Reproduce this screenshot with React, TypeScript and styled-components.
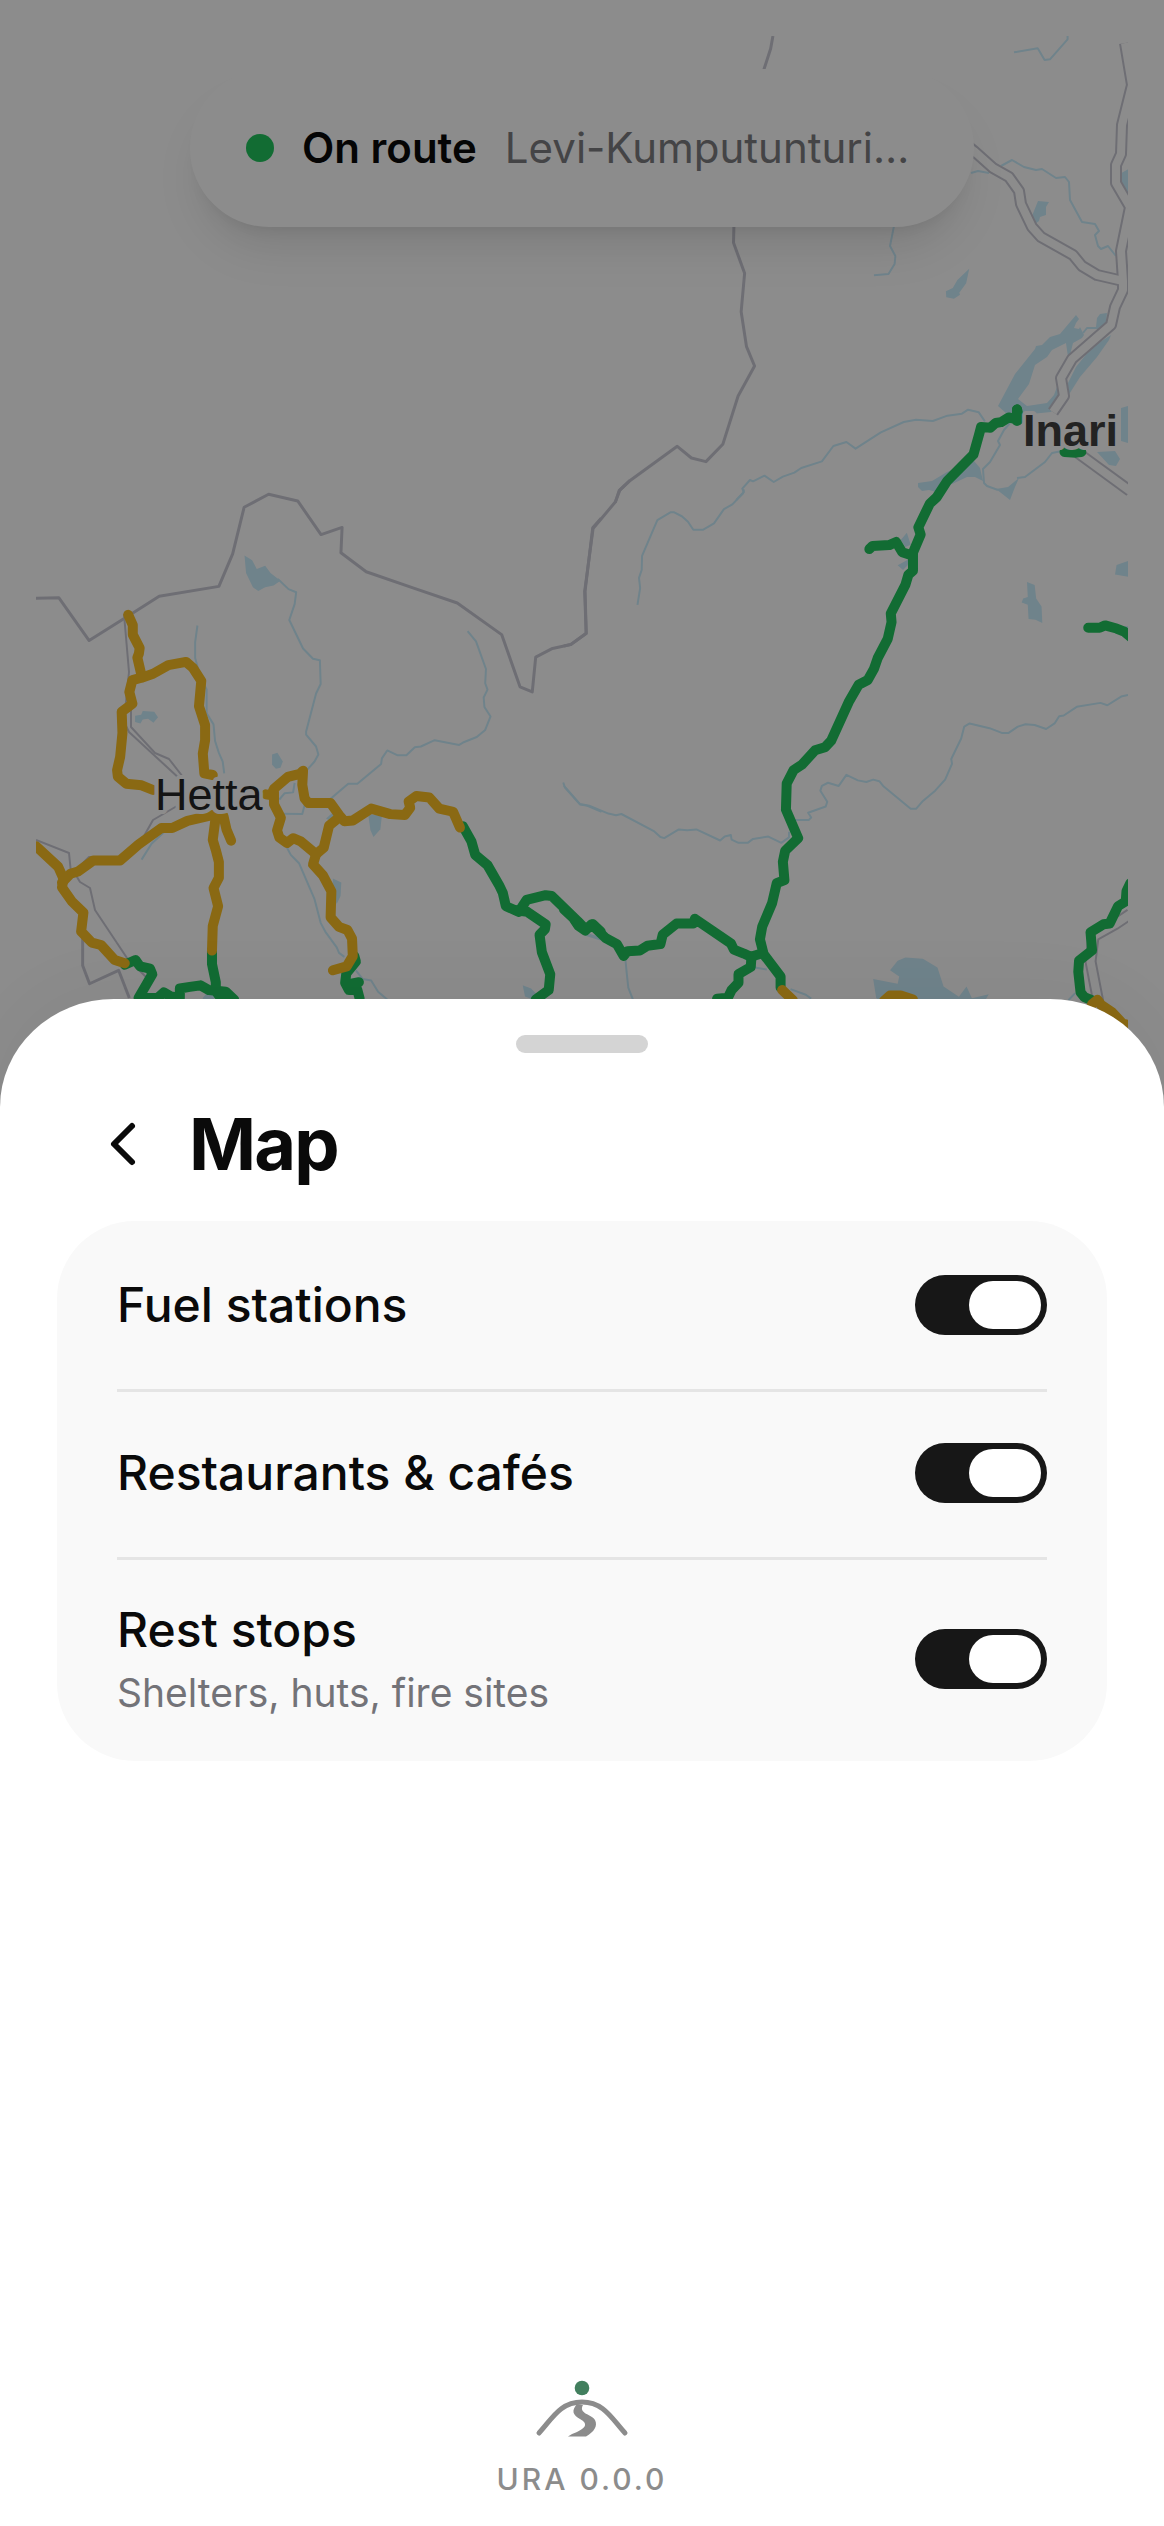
import React from "react";
import styled, { createGlobalStyle } from "styled-components";
import { ChevronLeft } from "lucide-react";

const GlobalStyle = createGlobalStyle`
  *, *::before, *::after { box-sizing: border-box; }
  body { margin: 0; background: #ffffff; font-family: Inter, "Liberation Sans", sans-serif; color: #0a0a0a; }
`;

const Screen = styled.main`
  display: grid;
  grid-template-columns: minmax(0, 1fr);
  grid-template-rows: 999px 120px 1fr;
  min-height: 100vh;
`;

const MapFrame = styled.div`
  grid-area: 1 / 1 / 3 / 2;
  padding: 36px 36px 0;
  background: #ffffff;
`;

const MapSvg = styled.svg`
  display: block;
  width: 100%;
  height: 1083px;
  path { vector-effect: non-scaling-stroke; stroke-linejoin: round; }
`;

const Line = styled.path<{ $color: string; $width: number; $round?: boolean }>`
  fill: none;
  stroke: ${(p) => p.$color};
  stroke-width: ${(p) => p.$width}px;
  stroke-linecap: ${(p) => (p.$round ? "round" : "butt")};
`;

const Water = styled.path`
  fill: #cbeefd;
`;

const Place = styled.text<{ $major?: boolean }>`
  font: ${(p) => (p.$major ? 700 : 400)} 45px "Liberation Sans", Arial, sans-serif;
  fill: ${(p) => (p.$major ? "#404040" : "#262626")};
  stroke: #ffffff;
  stroke-width: 8px;
  stroke-linejoin: round;
  paint-order: stroke;
`;

const StatusPill = styled.div`
  grid-area: 1 / 1;
  justify-self: center;
  align-self: start;
  display: flex;
  align-items: center;
  gap: 28px;
  width: 784px;
  max-width: calc(100% - 72px);
  height: 158px;
  margin-top: 69px;
  padding: 0 56px;
  border-radius: 79px;
  background: #ffffff;
  box-shadow: 0 30px 45px -9px rgba(0, 0, 0, 0.1), 0 12px 18px -12px rgba(0, 0, 0, 0.1);
  font-size: 42px;
  line-height: 60px;
  white-space: nowrap;
`;

const StatusDot = styled.span`
  flex: none;
  width: 28px;
  height: 28px;
  border-radius: 50%;
  background: #22c55e;
`;

const StatusLabel = styled.strong`
  font-weight: 600;
`;

const StatusRoute = styled.span`
  overflow: hidden;
  text-overflow: ellipsis;
  color: #7c7c80;
`;

const Scrim = styled.div`
  grid-area: 1 / 1 / 4 / 2;
  background: rgba(0, 0, 0, 0.45);
`;

const Sheet = styled.section`
  grid-area: 2 / 1 / 4 / 2;
  display: flex;
  flex-direction: column;
  padding: 36px 57px 24px;
  border-radius: 114px 114px 0 0 / 108px 108px 0 0;
  background: #ffffff;
  box-shadow: 0 -12px 72px rgba(0, 0, 0, 0.04);
`;

const Handle = styled.div`
  align-self: center;
  width: 132px;
  height: 18px;
  border-radius: 9px;
  background: #d4d4d4;
`;

const Header = styled.header`
  display: flex;
  align-items: center;
  gap: 30px;
  height: 96px;
  margin: 43px 0 29px;
  padding-left: 30px;
`;

const BackButton = styled.button`
  display: flex;
  padding: 0;
  border: 0;
  background: none;
  color: #0a0a0a;
  cursor: pointer;
`;

const Title = styled.h1`
  margin: 0;
  font-size: 72px;
  line-height: 96px;
  font-weight: 700;
  letter-spacing: -0.025em;
`;

const Card = styled.div`
  padding: 0 60px;
  border-radius: 78px;
  background: #f9f9f9;
`;

const Row = styled.label`
  display: flex;
  align-items: center;
  justify-content: space-between;
  min-height: 168px;
  padding: 39px 0;
  cursor: pointer;
  & + & { box-shadow: inset 0 3px #e5e5e5; }
`;

const RowText = styled.span`
  display: flex;
  flex-direction: column;
`;

const RowLabel = styled.span`
  font-size: 48px;
  line-height: 68px;
  font-weight: 500;
`;

const RowHint = styled.span`
  font-size: 39px;
  line-height: 58px;
  color: #737378;
`;

const Toggle = styled.input`
  appearance: none;
  flex: none;
  display: flex;
  align-items: center;
  width: 132px;
  height: 60px;
  margin: 0;
  padding: 6px;
  border-radius: 30px;
  background: #d4d4d4;
  cursor: pointer;
  &::before {
    content: "";
    width: 72px;
    height: 48px;
    border-radius: 24px;
    background: #ffffff;
  }
  &:checked { justify-content: flex-end; background: #171717; }
`;

const Footer = styled.footer`
  display: flex;
  flex-direction: column;
  align-items: center;
  gap: 20px;
  margin-top: auto;
  padding-top: 48px;
  color: #8c8c8c;
  font-size: 30px;
  line-height: 45px;
  font-weight: 500;
  letter-spacing: 0.1em;
`;

type Tile = { at: string; water: string[]; rivers: string[]; borders: string[]; roads: string[]; amber: string[]; green: string[] };

const northEast: Tile = {
  at: "translate(564 0) scale(.38265 .33333)",
  water: [
    "M1474 508v70l-18-30v-28z",
    "M1059 806l-8 44-18 28 2 6-16 12-20-4-1-18 18-10 12-24z",
  ],
  rivers: [
    "M1176 157l62-12 18 35 14-2 46-60v-10",
    "M862 680l-10 58 14 30-2 24-16 30-38 4",
    "M450 1500L470 1476 466 1466 486 1440 494 1444 524 1427 548 1446 572 1430 602 1418 620 1404 674 1384 704 1338 738 1326 762 1346 828 1297 888 1266 920 1259 964 1263 1002 1247 1040 1241 1056 1229 1084 1237 1100 1264",
  ],
  borders: [
    "M546 108l-6 38-18 64",
    "M444 680l-1 48 29 92-9 115 14 105 21 58-43 90-40 145-44 52-38-11-37-35-124 103-28 30-10 36",
  ],
  roads: [],
  amber: [],
  green: ["M1184 1228L1188 1256", "M1308 1356l30 2 14-2"],
};

const inari: Tile = {
  at: "translate(0 0)",
  water: [
    "M1038 201l11 1-3 5v8l-6 2-1 4-4 3-3-8z",
    "M1076 315l3 4-3 4-2 5 5 1 1-2 4 8-2 3-9 5-3 12-2 2-2-14-14 7-5 7-12 8-6 19-11 15 9 7 20-3 7-8 3-8h2l1 12-9 13-20 2-17 2-7-2-9-8 17-32 20-25 1-3 6-1 8-8 10-3z",
    "M1097 318l3-4 7-1-1 10-8 6-2-2z",
    "M1111 335l-2 5-12 17-17 20-12 19-1-11 9-18 16-20z",
    "M918 483l14-2 15-9 27-11 6 7 3 13-8-4h-8l-17 8-14 7-7-2-7 1-4-4z",
    "M996 489l12-2 11-9-4 9-5 13z",
    "M1121 408l7-2v37l-7-2z",
    "M1097 452l18-1 5 8-4 7-7-1z",
  ],
  rivers: [
    "M971 173l7-2 11 2M1001 166l11-6 12 7 12 3 6-1 14 9 9-1 4 5 1 18 6 11 6 11 13 2 4 7-4 4 3 11 3 3 7-3 8 10",
    "M1010 423l-6 7-6 11 2 4-10 17-7 7 1 14 3 3 11 4",
    "M1017 478l8-1 20-15 7-9 10-2",
    "M1083 333l4-5h11",
    "M1114 298l5-8",
  ],
  borders: [],
  roads: [
    "M964 143L974 151 993 168 1009 177 1019 191 1021 204 1032 227 1041 237 1073 255 1082 266 1097 275 1123 281",
    "M1125 43L1132 85 1122 125 1121 154 1116 165 1116 183 1130 207 1121 251 1123 281 1123 290 1115 307 1111 325 1072 359 1061 378 1064 396 1053 412",
    "M1078 453L1130 491",
  ],
  amber: [],
  green: ["M1017 411v10"],
};

const west: Tile = {
  at: "translate(0 480) scale(.38265 .39541)",
  water: [
    "M639 191l20 12 12 22 22-8 14 18 26 20-18 12-22 4-18 10-14-10-18-36z",
    "M353 596l16-2 4-10 30 2 10 14-12 14-14-10-14 2-6 10-14-4z",
    "M711 694l14-4 14 22-6 16-12 2-10-10z",
    "M962 845l36 4-4 34-18 20-8-18z",
    "M870 1008l22 10-2 34-10 20-12-30z",
    "M1366 1278l22 8 18 18-14 10-20-8z",
    "M852 856l14-12 18-2-22 20zM530 1310l8-10 22 2v12h-30z",
  ],
  rivers: [
    "M726 250l28 26 20 8-4 30-14 40 36 72 26 26 18 4 2 60-12 24-26 96 0 8 26 30 6 20-10 18-26 28",
    "M516 368L510 410 510 450 524 500 540 530 540 590 558 618 562 660 572 690 582 712 586 742",
    "M1222 382L1244 408 1270 478 1268 514 1274 530 1264 550 1266 574 1282 598 1268 632 1246 650 1210 664 1200 670 1136 658 1100 674 1084 676 1062 696 1038 696 1012 684 998 704 996 718 934 768 910 768 864 806",
    "M1472 765l4 12 40 44 16 2 40 16",
    "M770 766l-4 24-22 2-14 16M738 844l52 1 8-30",
    "M750 930L760 948 782 970 822 1060 838 1120 850 1142 880 1182 886 1196 900 1206M930 1240l18 22 22 4 18 28 24 20",
    "M1530 1150l40 12M370 960l26-40 40-36",
  ],
  borders: [
    "M94 299l60-1 79 108 105-64 78-48 156-25 36-82 30-118 64-33 76 17 61 85 55-18-3 64 66 48 126 42 112 37 116 80 48 132 32 13 9-88 44-22 48-10 40-28-3-107 20-160 22-24",
    "M216 1158v70l18 46 76-34 28 70",
  ],
  roads: [],
  amber: [
    "M335 341l12 26 0 24 18 34-2 14-4 10 12 50",
    "M400 784L370 772 330 768 308 750 306 734 314 700 320 640 318 586 346 566 338 536 346 506 370 500 400 490 440 468 486 460 504 475 526 508 520 572 536 620 536 658 530 692 534 742 556 746",
    "M695 795l13 2 8-16 36-30 32-8 8-8-2 36 6 34 10 12 58 0 22 30 14 16 22-2 48-30 50 14 38 2 14-18-4-16 20-14 34 4 26 28 36 8 18 40",
    "M716 790L716 820 734 854 724 886 730 904 750 918 766 906 786 914 826 946 846 930 860 874 888 852",
    "M826 946L818 972 844 1000 866 1040 864 1106 886 1130 908 1138 920 1160 922 1204 906 1230 870 1240",
    "M560 846L490 862 450 880 422 880 362 922 314 962 244 962 204 990 184 996 162 1018",
    "M94 926L152 978 166 1008 162 1030 188 1066 218 1094 212 1142 240 1170 264 1176 300 1214 326 1222",
    "M564 850l-8 60 8 26 8 30 0 40-14 26 12 46-14 50-2 62",
    "M584 850l8 34 12 28",
  ],
  green: [
    "M326 1226L354 1214 366 1230 392 1236 398 1250 362 1310 412 1310 428 1296 446 1306 470 1310 470 1286 496 1282 524 1278 546 1290 590 1294 612 1314",
    "M554 1190L554 1224 564 1270 564 1292 572 1304 596 1304",
    "M926 1204L930 1218 905 1248 902 1272 912 1290 934 1290 940 1312M905 1276L938 1270",
    "M1210 876l22 38 10 34 32 26 30 50 10 20 8 34 34 14 20-30 50-12 16 2 68 64 20 20 20-12 20 18",
    "M1348 1088l30 4 48 32-2 12-14 14 6 44 22 56-4 40-34 24",
  ],
};

const east: Tile = {
  at: "translate(564 400) scale(.38265 .39541)",
  water: [
    "M1210 460l20 8 4 34 14 20 2 42-18-8-18-2-2-36-16-6 4-10 12-4z",
    "M1474 407v40l-34-6 4-24z",
    "M880 354l16-18 10 30-14 6zM872 418l30-16-4 16-12 12z",
    "M808 1464l64 12 4-18-24-16 20-24 20-8 46 3 38 22 16 48 40 26 20-26 14 30 44-10-12 20-20 2-8 20-224 2v-20l-30-14z",
    "M1464 572h10v10z",
  ],
  rivers: [
    "M470 226L468 236 440 264 418 276 392 312 364 328 338 328 324 308 308 294 288 284 278 284 244 304 228 340 204 394 203 430 196 450 199 476 192 518",
    "M0 976l42 46 24 4 50 20 20 4 14-3 86 44 16 14 10 3 38-22 22 2 24-2 62 28 12-10 16-4 2 12 18 8 24 0 14-10 40-6 34 16 20-14 0-14",
    "M598 1062L640 1062 646 1056 638 1044 684 1028 688 1016 670 988 674 976 690 968 718 976 738 948 768 962 790 966 808 960 824 964 834 976 906 1034 920 1034 938 1014 970 988 996 960 1014 920 1012 908 1038 856 1046 826 1060 818 1112 830 1144 842 1162 842 1186 826 1206 820 1230 822 1260 832 1282 818 1294 800 1306 798 1340 776 1402 766 1420 772 1456 750 1474 746",
    "M160 1410l4 40 4 36 12 30M500 1420l-16-8 18 24 28 4M66 1352l26 8M592 1490l40 14 14 10M1336 1500l-18 18",
  ],
  borders: [
    "M172 204L146 228 134 258 76 325 54 484 58 590 18 618 0 622",
  ],
  roads: ["M1480 1300L1440 1326 1384 1356 1376 1420 1396 1520"],
  amber: ["M570 1492l28 26", "M836 1520L852 1506 880 1506 912 1516", "M1380 1528L1394 1517 1404 1530 1432 1548 1460 1577 1480 1582"],
  green: [
    "M1184 24L1188 50 1162 44 1142 56 1128 58 1114 70 1090 68 1084 90 1070 138 1002 204 974 246 956 262 926 322 932 340 912 386 912 432 900 442 892 468 854 540 856 562 846 604 820 652 810 680 794 708 770 720 744 764 698 862 682 878 656 886 622 922 600 936 582 970 580 1036 612 1108 578 1140 572 1168 576 1214 556 1222 544 1272 518 1332 512 1364 522 1402 566 1458 566 1486",
    "M798 377l8-8 44-2 18-8 16 26 26 8",
    "M1370 576l30 0 14-6 30 8 20 8 18 14",
    "M1480 1222L1470 1242 1468 1268 1448 1280 1426 1324 1410 1326 1376 1346 1380 1392 1346 1418 1344 1446 1350 1498 1360 1510 1390 1522",
    "M0 1288L24 1310 38 1330 56 1342 72 1326 108 1360 138 1376 156 1406 166 1394 198 1392 218 1380 252 1376 258 1352 294 1324 338 1324 342 1312 436 1374 444 1390 470 1400 488 1408 516 1400",
    "M490 1408L488 1434 456 1452 456 1474 438 1492 428 1512 400 1514",
  ],
};

const tiles = [west, east, northEast, inari];

const sideRoads = [
  "M124 614l5 58-5 50 5 10 26 24 26 24",
  "M131 706v21l24 26 14 6 14 18M36 840l33 13 2 20M177 806l-24 14-18 32-18 6-28-1-15 15 6 10 10 6 5 22 32 48 22 22",
];

function RouteMap() {
  return (
    <MapSvg viewBox="36 36 1092 1083" preserveAspectRatio="xMidYMin slice" role="img" aria-label="Snowmobile route map">
      {tiles.map((t) => (
        <g key={t.at} transform={t.at}>
          {t.water.map((d) => <Water key={d} d={d} />)}
          {t.rivers.map((d) => <Line key={d} d={d} $color="#cbeefd" $width={2} />)}
          {t.borders.map((d) => <Line key={d} d={d} $color="#c9c9d4" $width={3} />)}
        </g>
      ))}
      {sideRoads.map((d) => <Line key={d} d={d} $color="#c9c9d4" $width={2} />)}
      {tiles.map((t) => (
        <g key={t.at} transform={t.at}>
          {t.roads.map((d) => <Line key={d} d={d} $color="#c9c9d4" $width={12} />)}
          {t.roads.map((d) => <Line key={"in" + d} d={d} $color="#ffffff" $width={8} />)}
        </g>
      ))}
      {tiles.map((t) => (
        <g key={t.at} transform={t.at}>
          {t.green.map((d) => <Line key={d} d={d} $color="#22c55e" $width={10} $round />)}
          {t.amber.map((d) => <Line key={d} d={d} $color="#fbbf24" $width={10} $round />)}
        </g>
      ))}
      <Place x={155} y={810}>Hetta</Place>
      <Place x={1023} y={446} $major>Inari</Place>
    </MapSvg>
  );
}

function Logo() {
  return (
    <svg width="96" height="60" viewBox="0 0 96 60" aria-hidden="true">
      <circle cx="48" cy="11" r="7.3" fill="#427f5e" />
      <path d="M5 56C18 42 26 25 48 25S78 42 91 56" fill="none" stroke="#8c8c8c" strokeWidth="5" strokeLinecap="round" />
      <path d="M43 27C37 34 39 38 46 42C55 47 51 51 43 55Q37 57 34 59.500H52C60 55 64 49 61 43C58 37 44 37 49 28Z" fill="#8c8c8c" />
    </svg>
  );
}

const layers = [
  { id: "fuel", label: "Fuel stations" },
  { id: "food", label: "Restaurants & cafés" },
  { id: "rest", label: "Rest stops", hint: "Shelters, huts, fire sites" },
];

export default function App() {
  return (
    <>
      <GlobalStyle />
      <Screen>
        <MapFrame>
          <RouteMap />
        </MapFrame>
        <StatusPill>
          <StatusDot />
          <StatusLabel>On route</StatusLabel>
          <StatusRoute>Levi-Kumputunturi…</StatusRoute>
        </StatusPill>
        <Scrim />
        <Sheet>
          <Handle />
          <Header>
            <BackButton type="button" aria-label="Back">
              <ChevronLeft size={72} />
            </BackButton>
            <Title>Map</Title>
          </Header>
          <Card>
            {layers.map((l) => (
              <Row key={l.id} htmlFor={l.id}>
                <RowText>
                  <RowLabel>{l.label}</RowLabel>
                  {l.hint && <RowHint>{l.hint}</RowHint>}
                </RowText>
                <Toggle id={l.id} type="checkbox" role="switch" defaultChecked />
              </Row>
            ))}
          </Card>
          <Footer>
            <Logo />
            <span>URA 0.0.0</span>
          </Footer>
        </Sheet>
      </Screen>
    </>
  );
}
